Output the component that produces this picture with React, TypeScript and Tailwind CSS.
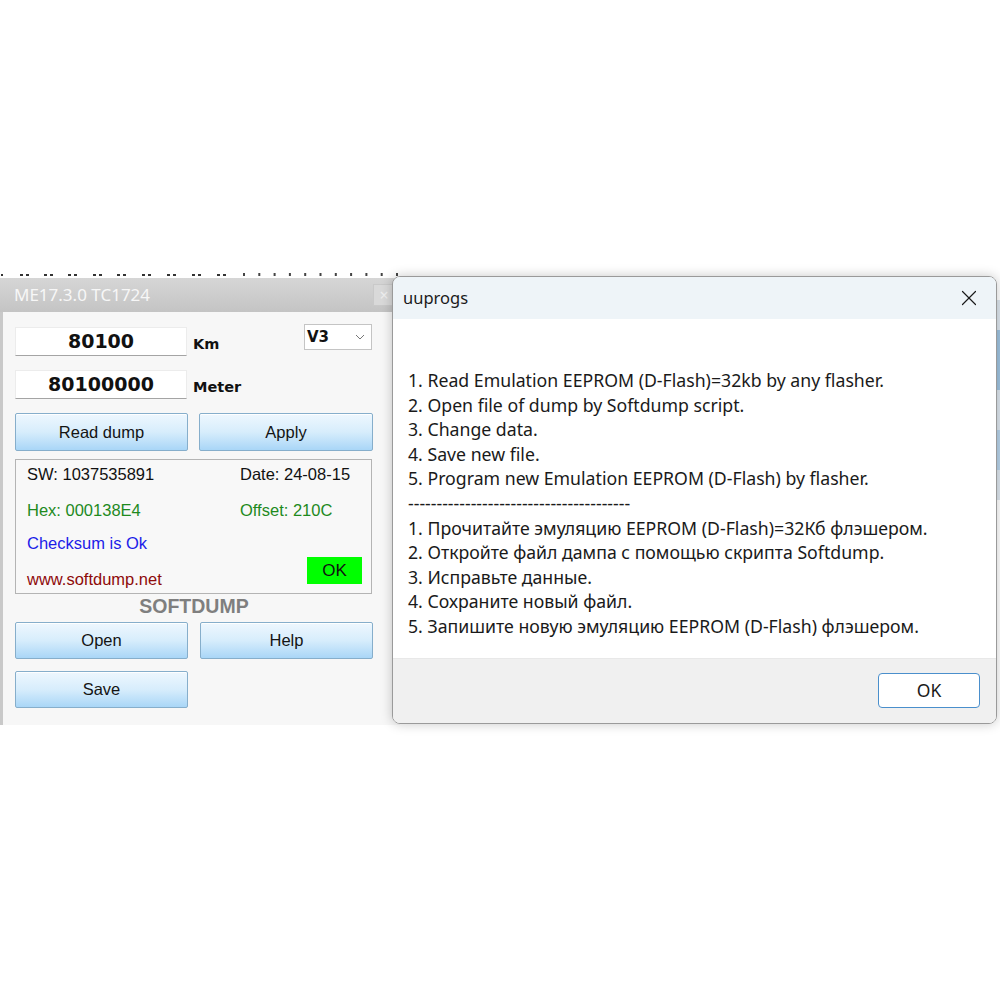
import { X } from "lucide-react";

const tahoma = { fontFamily: '"Liberation Sans", Arial, sans-serif' };
const segoe = { fontFamily: '"Noto Sans", "Open Sans", sans-serif' };
const verdana = { fontFamily: '"DejaVu Sans", Verdana, sans-serif' };

const steps = [
  "1. Read Emulation EEPROM (D-Flash)=32kb by any flasher.",
  "2. Open file of dump by Softdump script.",
  "3. Change data.",
  "4. Save new file.",
  "5. Program new Emulation EEPROM (D-Flash) by flasher.",
  "---------------------------------------",
  "1. Прочитайте эмуляцию EEPROM (D-Flash)=32Кб флэшером.",
  "2. Откройте файл дампа с помощью скрипта Softdump.",
  "3. Исправьте данные.",
  "4. Сохраните новый файл.",
  "5. Запишите новую эмуляцию EEPROM (D-Flash) флэшером.",
];

function BlueButton({ label, width }: { label: string; width: string }) {
  return (
    <button
      className={`${width} h-full rounded-[2px] border border-[#86aecb] bg-linear-to-b from-[#eef7fe] via-[#d7edfc] to-[#a9d6f7] text-[16.5px] text-[#141414] shadow-[inset_0_1px_0_rgba(255,255,255,0.9)]`}
      style={tahoma}
    >
      {label}
    </button>
  );
}

function NumberField({ value, unit }: { value: string; unit: string }) {
  return (
    <div className="flex items-center">
      <div
        className="flex h-[29px] w-[172px] items-center justify-center border border-[#ececec] border-b-[#a4a4a4] bg-white text-[19px] font-bold text-[#111]"
        style={verdana}
      >
        {value}
      </div>
      <span className="ml-[6px] mt-[6px] text-[14.5px] font-bold text-[#111]" style={verdana}>
        {unit}
      </span>
    </div>
  );
}

// dotted edge of the window lying behind
function DotStrip() {
  const pairs = [20, 44, 68, 93, 117, 142, 167, 192, 217];
  const ticks = Array.from({ length: 11 }, (_, i) => 243 + i * 15.3);
  return (
    <svg width="400" height="8" className="block">
      <rect x="1" y="4" width="2" height="2" fill="#333" />
      {pairs.map((x) => (
        <g key={x}>
          <rect x={x} y="4" width="3" height="2" fill="#333" />
          <rect x={x + 6} y="4" width="3" height="2" fill="#333" />
        </g>
      ))}
      {ticks.map((x) => (
        <rect key={x} x={x} y="3" width="2" height="3" fill="#444" />
      ))}
    </svg>
  );
}

function SoftdumpWindow() {
  return (
    <div className="absolute left-0 top-[270px] w-[400px]">
      <DotStrip />
      {/* title bar */}
      <div className="flex h-[34px] items-center bg-linear-to-b from-[#d6d6d6] to-[#c4c4c4] pl-[14px] pr-[5px]">
        <span className="text-[17px] text-[#f7f7f7]" style={segoe}>
          ME17.3.0 TC1724
        </span>
        <div className="ml-auto flex h-[22px] w-[22px] items-center justify-center border border-[#c9c9c9] bg-[#d9d9d9] text-[16px] leading-none text-[#eeeeee]">
          ×
        </div>
      </div>
      {/* body */}
      <div className="flex h-[413px] flex-col border-l-[3px] border-[#c9c9c9] bg-[#f7f7f7] pl-[12px]">
        <div className="mt-[12px] flex w-[358px] items-start">
          <div className="mt-[3px]">
            <NumberField value="80100" unit="Km" />
          </div>
          <div
            className="ml-auto mr-[1px] flex h-[26px] w-[68px] items-center border border-[#c4c4c4] bg-white pl-[2px] pr-[6px]"
            style={verdana}
          >
            <span className="text-[15px] font-bold text-[#111]">V3</span>
            <svg width="10" height="6" viewBox="0 0 10 6" className="ml-auto">
              <path d="M1 1 L5 5 L9 1" fill="none" stroke="#777" strokeWidth="1" />
            </svg>
          </div>
        </div>
        <div className="mt-[14px]">
          <NumberField value="80100000" unit="Meter" />
        </div>
        <div className="mt-[14px] flex h-[38px] w-[358px] gap-[11px]">
          <BlueButton label="Read dump" width="w-[173px]" />
          <BlueButton label="Apply" width="w-[174px]" />
        </div>
        {/* dump info */}
        <div
          className="mt-[8px] flex h-[135px] w-[357px] flex-col border border-[#b4b4b4] bg-[#f8f8f8] pl-[11px] pr-[9px] text-[16.5px]"
          style={tahoma}
        >
          <div className="mt-[4px] flex h-[20px] items-center text-[#111]">
            <span className="w-[213px]">SW: 1037535891</span>
            <span>Date: 24-08-15</span>
          </div>
          <div className="mt-[16px] flex h-[20px] items-center text-[#1e8a1e]">
            <span className="w-[213px]">Hex: 000138E4</span>
            <span>Offset: 210C</span>
          </div>
          <div className="flex justify-between">
            <div className="flex flex-col">
              <span className="mt-[13px] flex h-[20px] items-center text-[#1c1ce8]">Checksum is Ok</span>
              <span className="mt-[16px] flex h-[20px] items-center text-[#8e0a0a]">www.softdump.net</span>
            </div>
            <div className="mb-[5px] flex h-[27px] w-[55px] items-center justify-center self-end bg-[#00ff00] text-[17px] text-[#111]">
              OK
            </div>
          </div>
        </div>
        <div
          className="flex h-[25px] w-[358px] items-center justify-center text-[19.5px] font-bold text-[#7f7f7f]"
          style={tahoma}
        >
          SOFTDUMP
        </div>
        <div className="mt-[3px] flex h-[37px] w-[358px] gap-[12px]">
          <BlueButton label="Open" width="w-[173px]" />
          <BlueButton label="Help" width="w-[173px]" />
        </div>
        <div className="mt-[12px] flex h-[37px]">
          <BlueButton label="Save" width="w-[173px]" />
        </div>
      </div>
    </div>
  );
}

function MessageDialog() {
  return (
    <div
      className="absolute left-[392px] top-[276px] flex h-[448px] w-[605px] flex-col overflow-hidden rounded-[8px] border border-[#9a9a9a] shadow-[0_0_12px_rgba(0,0,0,0.22)]"
      style={segoe}
    >
      <div className="flex h-[42px] shrink-0 items-center bg-[#eef4f8] pl-[10px] pr-[14px]">
        <span className="text-[16.5px] text-[#1a1a1a]">uuprogs</span>
        <X className="ml-auto h-[26px] w-[26px] text-[#1a1a1a]" strokeWidth={1.1} />
      </div>
      <div className="flex-1 bg-white pl-[15px] pt-[49px]">
        {steps.map((s, i) => (
          <div key={i} className="text-[17.7px] leading-[24.6px] text-[#1a1a1a] whitespace-pre">
            {s}
          </div>
        ))}
      </div>
      <div className="flex h-[65px] shrink-0 justify-end border-t border-[#e8e8e8] bg-[#f0f0f0] pr-[16px] pt-[14px]">
        <button className="h-[35px] w-[102px] rounded-[4px] border border-[#4a8fcc] bg-white text-[17.5px] text-[#1a1a1a]">
          OK
        </button>
      </div>
    </div>
  );
}

export default function App() {
  return (
    <div className="relative h-[1000px] w-[1000px] overflow-hidden bg-white">
      <SoftdumpWindow />
      {/* edge of another window peeking out on the right */}
      <div className="absolute left-[997px] top-[300px] flex h-[200px] w-[3px] flex-col bg-[#dde6ee]">
        <div className="mt-[30px] h-[60px] bg-[#9fc3e0]" />
        <div className="mt-[40px] h-[40px] bg-[#b7d3ea]" />
      </div>
      <MessageDialog />
    </div>
  );
}
